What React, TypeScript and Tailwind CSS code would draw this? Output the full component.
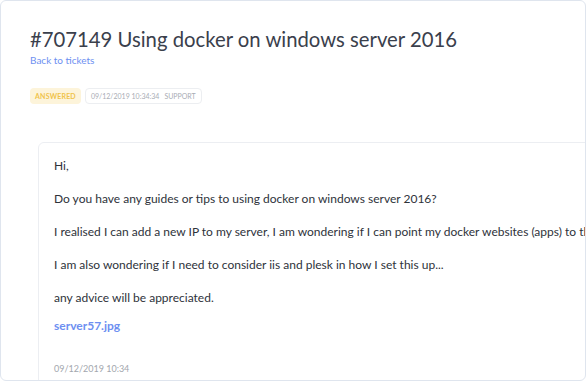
export default function App() {
  const paragraphs = [
    "Hi,",
    "Do you have any guides or tips to using docker on windows server 2016?",
    "I realised I can add a new IP to my server, I am wondering if I can point my docker websites (apps) to this IP and leave plesk running on the main IP?",
    "I am also wondering if I need to consider iis and plesk in how I set this up...",
    "any advice will be appreciated.",
  ];

  return (
    <div className="h-[382px] w-[587px] bg-white font-['Lato',sans-serif]">
      <div className="h-[381px] w-[586px] overflow-hidden rounded-md border border-[#dfe5ee] bg-white">
        <div className="pl-[29px] pt-[24px]">
          <h1 className="whitespace-nowrap text-[20.3px] font-normal leading-[28px] text-[#3a404c]">
            #707149 Using docker on windows server 2016
          </h1>
          <a className="block text-[10px] leading-[14px] text-[#6d8ff1]">Back to tickets</a>
          <div className="mt-[21px] flex items-center gap-[4px]">
            <span className="rounded-[4px] bg-[#fdf4da] px-[5px] py-[3px] text-[7px] font-bold uppercase leading-[10px] tracking-[0.2px] text-[#f0c34a]">
              Answered
            </span>
            <span className="flex gap-[5px] rounded-[4px] border border-[#eceef1] px-[5px] py-[2px] text-[7px] leading-[10px] text-[#a9adb5]">
              <span>09/12/2019 10:34:34</span>
              <span className="uppercase">Support</span>
            </span>
          </div>
        </div>
        <div className="ml-[37px] mt-[38px] w-[600px] rounded-md border border-[#eceef2] px-[15px] pt-[13px]">
          {paragraphs.map((p, i) => (
            <p
              key={p}
              className={`whitespace-nowrap text-[12px] leading-[20px] text-[#2e323a] ${i === paragraphs.length - 1 ? "mb-[8px]" : "mb-[13px]"}`}
            >
              {p}
            </p>
          ))}
          <a className="block text-[12px] font-bold leading-[20px] text-[#6d8ff1]">server57.jpg</a>
          <div className="mt-[26px] pb-[20px] text-[9px] leading-[14px] text-[#a3a7ae]">09/12/2019 10:34</div>
        </div>
      </div>
    </div>
  );
}
